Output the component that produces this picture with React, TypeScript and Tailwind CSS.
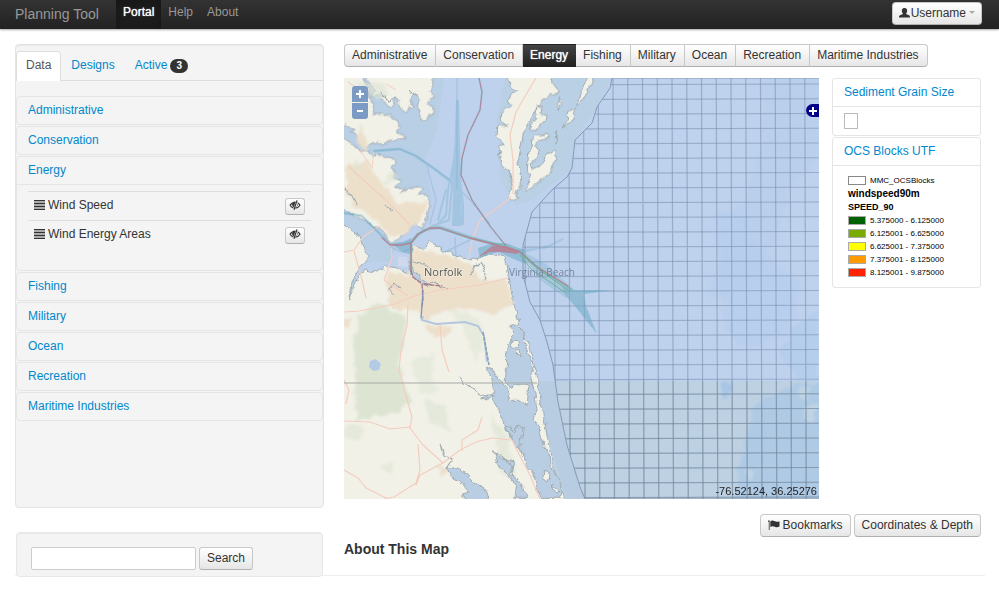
import type { ReactNode } from "react";

const font = "font-['Liberation_Sans',Arial,sans-serif]";
const btn =
  "border border-[#c8c8c8] border-b-[#b0b0b0] bg-linear-to-b from-white to-[#e6e6e6] pb-0.5 text-[#333] cursor-pointer";

const themes = [
  "Administrative",
  "Conservation",
  "Energy",
  "Fishing",
  "Military",
  "Ocean",
  "Recreation",
  "Maritime Industries",
];

const ramp = [
  { color: "bg-[#006100]", label: "5.375000 - 6.125000" },
  { color: "bg-[#7aab00]", label: "6.125001 - 6.625000" },
  { color: "bg-[#ffff00]", label: "6.625001 - 7.375000" },
  { color: "bg-[#ff9900]", label: "7.375001 - 8.125000" },
  { color: "bg-[#ff2200]", label: "8.125001 - 9.875000" },
];

function ListIcon() {
  return (
    <svg width="11" height="10" viewBox="0 0 11 10" aria-hidden="true" shapeRendering="crispEdges">
      <path d="M0 0H11V10H0Z" fill="#aaa" />
      <path d="M0 .5h11M0 3.500h11M0 6.500h11M0 9.500h11" stroke="#333" strokeWidth="1" />
    </svg>
  );
}

function EyeOffIcon() {
  return (
    <svg width="12" height="10" viewBox="0 0 12 10" fill="none" aria-hidden="true">
      <path d="M1 5.200Q3 2.200 6.600 2.100M1 5.200Q2.200 7.200 4.300 8" stroke="#333" strokeWidth="1.200" />
      <path d="M6.300 2.500 4.700 7.400Q2.900 6.400 3.100 4.600 3.700 2.700 6.300 2.500Z" fill="#333" />
      <path d="M8.600 2.700Q10.200 3.500 11 5.200 9.300 7.900 6.300 8.100" stroke="#333" strokeWidth="1.200" />
      <path d="M8 .4 5 9.700" stroke="#333" strokeWidth="1.200" />
      <path d="M8.700 4.200Q9 5.700 7.400 6.600" stroke="#555" strokeWidth=".8" />
    </svg>
  );
}

function UserIcon() {
  return (
    <svg width="11" height="10" viewBox="0 0 11 10" fill="#333" aria-hidden="true">
      <path d="M5.500 0C7.700 0 8.300 1.400 8.100 3.200 8 4.500 7.300 5 7.200 5.700 7.300 6.400 8.400 6.600 9.600 7 10.700 7.400 11 8.200 11 9.500H0C0 8.200.3 7.400 1.400 7 2.600 6.600 3.700 6.400 3.800 5.700 3.700 5 3 4.500 2.900 3.200 2.700 1.400 3.300 0 5.500 0Z" />
    </svg>
  );
}

function FlagIcon() {
  return (
    <svg width="12" height="10" viewBox="0 0 12 10" fill="#333" aria-hidden="true">
      <path d="M0 .5H1.600V10H.8V2L0 1.400Z" />
      <path d="M2.300 1.200C4 .2 5.400.6 6.800 1.300 8.400 2 9.800 1.900 11.500 1.200V6.600C9.900 7.500 8.300 7.500 6.800 6.800 5.200 6.100 3.900 5.900 2.300 6.900Z" />
    </svg>
  );
}

function ThemeLink({ name }: { name: string }) {
  return (
    <a href="#" className="block px-[11px] py-[5px] leading-[17px] text-[#0088cc]">
      {name}
    </a>
  );
}

function LayerRow({ name }: { name: string }) {
  return (
    <li className="flex h-[29px] items-center justify-between border-t border-[#ddd] px-1.5 text-[#333]">
      <span className="flex items-center gap-[3px] pb-0.5">
        <ListIcon />
        {name}
      </span>
      <button
        type="button"
        aria-label={`Hide ${name}`}
        className={`flex h-[17px] w-5 items-center justify-center rounded-[3px] ${btn}`}
      >
        <EyeOffIcon />
      </button>
    </li>
  );
}

function LegendCard({ title, children }: { title: string; children: ReactNode }) {
  return (
    <section className="rounded-[3px] border border-[#e5e5e5]">
      <h2 className="border-b border-[#e5e5e5] px-[11px] py-[5px] leading-[17px]">
        <a href="#" className="text-[#0088cc]">
          {title}
        </a>
      </h2>
      {children}
    </section>
  );
}

const gridStops = Array.from({ length: 30 }, (_, i) => i);
const outerShelf =
  "M612 78 610 88 597 107 592 123 575 140 572 168 567 177 553 189 532 212 523 245 523 275 530 302 540 320 547 342 553 365 558 402 567 445 580 487 585 499H840V78Z";

function ChartMap() {
  return (
    <svg
      viewBox="344 78 475 421"
      preserveAspectRatio="xMidYMid slice"
      className="block h-full w-full"
      role="img"
      aria-label="Map of the coast around Norfolk and Virginia Beach"
    >
      <defs>
        <filter id="coast" x="0" y="0" width="100%" height="100%" colorInterpolationFilters="sRGB">
          <feTurbulence type="fractalNoise" baseFrequency="0.13" numOctaves="3" seed="4" />
          <feDisplacementMap in="SourceGraphic" scale="6" xChannelSelector="R" yChannelSelector="G" />
        </filter>
        <filter id="soft" x="-20%" y="-20%" width="140%" height="140%" colorInterpolationFilters="sRGB">
          <feTurbulence type="fractalNoise" baseFrequency="0.09" numOctaves="3" seed="9" />
          <feDisplacementMap in="SourceGraphic" scale="10" xChannelSelector="R" yChannelSelector="G" />
          <feGaussianBlur stdDeviation="0.8" />
        </filter>
        <clipPath id="shelf">
          <path d={outerShelf} />
        </clipPath>
      </defs>

      <rect x="344" y="78" width="475" height="421" fill="#bed1ed" />
      <path d="M344 78H444L437 130 425 160 432 200 420 222 400 240 390 262 344 262Z" fill="#b9cfe6" />
      <path d="M505 78H612L597 107 575 140 572 168 532 200 516 205 500 180 497 120Z" fill="#bad0e5" />
      <g filter="url(#soft)" fill="#b3cdec" opacity=".75">
        <path d="M765 78H819V160L790 190 770 250 745 290 710 300 715 270 740 220 760 150Z" opacity=".5" />
        <path d="M715 215 740 205 760 250 800 285 790 330 750 350 725 330Z" opacity=".6" />
        <path d="M819 310 790 330 780 355 800 383H819Z" />
      </g>
      <path d="M344 381H819V499H344Z" fill="#bdd1e3" />
      <path d="M532 381 H556L558 402 567 445 580 487 585 499H567L547 435Z" fill="#b8cde2" />
      <g filter="url(#soft)">
        <path d="M825 383H795L785 392 765 398 752 408 748 435 740 460 732 505H825Z" fill="#afcae4" />
        <path d="M800 385 810 388 806 400 798 398ZM803 410 818 405 812 424 803 420ZM746 468 755 472 750 482Z" fill="#c0d4e4" />
        <path d="M722 383 732 384 728 400 722 396Z" fill="#a9c6e6" />
      </g>

      <g filter="url(#coast)" stroke="#a0abb2" strokeWidth="1" strokeLinejoin="round">
        <path
          fill="#f1f1e8"
          d="M340 222 350 230 360 237 368 256 360 268 352 282 350 300 354 284 364 270 378 272 386 266 397 268 407 274 411 262 412 246 424 249 429 241 444 250 456 256 472 260 486 256 494 255 503 257 507 264 511 290 515 308 520 325 530 348 537 375 541 402 547 435 553 468 567 505H330Z"
        />
        <g transform="translate(340 75) scale(.3333)" strokeWidth="3">
          <path
            fill="#f1f1e8"
            d="M75 0 95 30 105 45 100 66 122 60 130 80 145 98 162 92 160 70 176 74 182 104 198 112 208 96 222 98 215 70 224 58 238 72 232 94 240 112 240 132 262 138 270 118 280 120 278 98 262 84 276 70 272 50 282 30 278 0Z"
          />
          <path
            fill="#f1f1e8"
            d="M0 0H68L80 30 96 86 98 120 122 112 134 122 150 118 170 138 182 156 168 172 198 190 155 194 130 210 110 202 78 214 62 205 50 180 30 172 46 164 24 150 0 142Z"
          />
          <path
            fill="#f1f1e8"
            d="M0 186 32 202 54 226 78 228 98 238 122 240 158 250 166 266 150 276 166 288 160 310 184 318 166 334 196 340 180 356 212 338 238 335 248 344 232 356 258 362 270 388 262 420 246 462 226 440 212 458 190 480 158 504 142 492 122 458 94 448 62 432 0 396Z"
          />
        </g>
        <g transform="translate(480 75) scale(.3333)" strokeWidth="3" fill="#f1f1e8">
          <path d="M84 0 90 36 114 46 92 56 84 84 92 92 66 112 64 134 82 150 54 152 50 186 76 208 56 214 62 260 88 292 97 336 86 364 94 376 116 372 106 352 124 332 116 250 130 176 148 140 184 78 214 60 238 50 215 20 216 0Z" />
          <path d="M170 96 184 92 180 116 202 122 196 138 172 162 148 164 154 144 168 130Z" />
          <path d="M160 178 186 180 204 174 204 188 178 194 164 214 176 230 172 246 152 262 158 280 190 266 200 238 226 224 228 252 216 282 196 306 160 336 134 350 142 322 152 300 142 286 146 232 156 218Z" />
          <path d="M325 0H350L322 56 290 92 300 56ZM262 110 288 100 278 136 246 160 262 134ZM232 166 226 220 230 188ZM238 66 244 90 234 106Z" />
        </g>
      </g>

      <g filter="url(#soft)">
        <g fill="#ecdfca" opacity=".95">
          <path d="M346 168 366 160 374 174 390 190 397 205 426 200 426 214 417 225 396 238 386 232 376 220 352 206 346 190Z" />
          <path d="M414 249 430 250 444 254 456 260 468 263 474 275 484 280 508 280 513 306 490 314 470 308 446 310 425 322 415 309 400 312 388 300 386 270 408 276Z" />
          <path d="M424 324 452 326 446 338 430 334Z" />
          <path d="M358 122 368 146 368 154 358 142ZM344 318 356 318 344 328Z" />
          <path d="M436 466 450 468 440 477Z" />
        </g>
        <g fill="#dde5d2">
          <path d="M358 316 380 302 405 318 404 350 398 362 402 380 412 400 400 412 374 418 356 420 354 345Z" />
          <path d="M412 360 434 355 430 380 440 392 420 394ZM450 308 480 318 484 350 474 360 460 325Z" opacity=".5" />
          <path d="M425 400 445 405 450 430 430 425ZM344 425 364 428 360 442 344 436ZM380 465 394 462 390 475Z" opacity=".6" />
          <path d="M492 415 505 430 515 470 520 490 500 470 496 440ZM352 82 385 86 392 96 378 100ZM352 160 362 165 356 182ZM388 172 396 178 384 186Z" opacity=".6" />
        </g>
      </g>
      <path d="M398 257 407 257 408 267 398 266Z" fill="#cfd9ec" />

      <g filter="url(#coast)" fill="#b9cee2" stroke="#a0abb2" strokeLinejoin="round">
        <g transform="translate(340 285) scale(.3333)" strokeWidth="3">
          <path d="M512 124 530 120 548 136 552 170 560 196 574 228 580 262 572 280 584 320 590 370 580 394 594 420 610 470 628 520 632 552 654 580 668 612 660 640H600L584 580 560 540 544 490 522 470 498 438 488 400 462 350 450 330 462 322 456 286 442 250 454 248 468 272 492 300 510 322 506 346 534 346 562 362 566 302 526 298 508 306 496 290 500 230 498 200 512 170 520 144Z" />
          <path d="M492 420 512 424 520 444 536 420 550 426 542 484 528 482Z" />
          <path d="M318 546 350 550 382 568 400 590 430 608 452 650H388L364 630 386 624 360 590 330 572Z" />
          <path d="M460 494 482 524 520 530 512 570 544 596 560 640H524L530 602 502 566 480 548Z" />
          <path d="M425 338 456 332 442 346Z" />
        </g>
        <path fill="#f1f1e8" d="M511 341 519 342 518 348 512 348ZM515 352 520 350 521 356ZM544 470 550 474 548 482 543 478ZM552 484 560 490 556 494Z" />
        <path d="M409 262 414 270 420 278 430 284 428 287 418 281 410 275Z" />
        <path
          fill="none"
          strokeWidth="1.200"
          d="M459 376 464 384 472 388 478 392 486 396 494 396M440 445 444 455 452 460 448 466 445 468M494 450 502 458 512 466 514 478M344 188 352 196 358 206M400 287 394 284 388 290 394 294M424 284 434 282 448 289M480 262 474 268 470 276M480 262 486 272 484 282M412 262 422 264 430 268M380 92 388 100 396 98M410 90 416 96M386 205 392 210"
        />
      </g>
      <path d="M370 361 376 359 381 364 379 370 373 371 369 367Z" fill="#b3cbe6" />

      <g fill="none" stroke="#f4cdbf" strokeWidth="1.200" strokeLinejoin="round">
        <path d="M536 78 524 98 516 112 510 135 513 160 513 194M511 197 500 206 480 220 472 240 469 258" />
        <path d="M344 312 360 311 395 304 414 296 440 290 480 285 508 278" />
        <path d="M408 305 407 325 401 350 399 370 405 392 412 417 410 428 422 444 443 463" />
        <path d="M344 421 370 422 390 429 410 427M418 444 420 470 416 483 394 497 384 499M443 463 420 475 416 485M344 470 358 478 366 488 378 494 388 499" />
        <path d="M443 463 460 450 476 442 492 438 512 440 520 456 530 475 540 499M462 451 462 440 478 430 482 417" />
        <path d="M440 325 442 350 449 372M344 380 349 390 346 404M344 252 354 250 364 236 380 226M391 245 392 258 384 280 408 296M354 251 362 280 366 298M348 166 370 186 386 200 410 225" />
        <path d="M430 278 450 275M374 150 372 168 360 150M348 82 360 90 356 100M386 84 396 90" opacity=".8" />
      </g>
      <path d="M344 383H537" stroke="#a8aaa5" strokeWidth="1.200" />
      <path d="M423 316 422 320 436 324 465 322 478 326 484 336 487 362" fill="none" stroke="#b4c6de" strokeWidth="2" />
      <path d="M483 332 486 348 489 365" fill="none" stroke="#85a0b8" strokeWidth="1.500" strokeDasharray="4 1" />

      <g clipPath="url(#shelf)">
        <g stroke="#7187a8" strokeOpacity=".5" strokeWidth="1.200">
          {gridStops.map((i) => (
            <path key={i} d={`M${524.5 + i * 14.75} 78l1.500 421M515 ${85 + i * 14.75}l310 -1`} />
          ))}
        </g>
        <g stroke="#71838e" strokeOpacity=".35" strokeWidth="1.200">
          {gridStops.map((i) => (
            <path key={i} d={`M${525.6 + i * 14.75} 381l.4 118`} />
          ))}
          {gridStops.slice(21).map((i) => (
            <path key={i} d={`M515 ${85 + i * 14.75}l310 -1`} />
          ))}
        </g>
      </g>
      <path d={outerShelf} fill="none" stroke="#8799b6" strokeWidth="1" />

      <g fill="none" stroke="#559fbd" strokeLinecap="round" strokeLinejoin="round">
        <g opacity=".24">
          <path d="M456 100 459 100 462 226 452 226Z" fill="#559fbd" stroke="none" />
          <path d="M455 150 449 220 432 226M454 160 448 190 446 215 436 226M459 170 463 205 463 224M446 190 438 220" strokeWidth="2" />
          <path d="M374 151 400 149 416 156 436 170 454 184" strokeWidth="3" />
          <path d="M454 184 470 200 490 224M426 162 436 200 430 224" strokeWidth="1.200" />
          <path d="M344 213 362 216 382 236 392 245 410 242 424 230 440 227 470 237 500 246" strokeWidth="3" />
          <path d="M520 250 545 248 563 239M520 253 552 245M455 238 456 258M445 252 470 240M390 247 402 252 412 248" strokeWidth="1.500" />
        </g>
        <path d="M344 213 362 216 378 232 386 240M374 151 400 149 416 156 450 180" opacity=".4" strokeWidth="1" />
        <path d="M457 78V190" opacity=".35" strokeWidth="1" strokeDasharray="7 1" />
      </g>
      <g fill="#66a8c0" opacity=".5">
        <path d="M562 287 575 290 614 290 584 294 586 306 597 334 578 310 566 296Z" />
        <path d="M478 248 494 243 506 243 524 250 526 264 516 260 498 252 480 258Z" />
        <path d="M392 244 404 242 411 238 411 254 404 253Z" />
        <path d="M520 250 546 264 574 290 566 298 540 280Z" opacity=".5" />
      </g>
      <g fill="none" strokeLinejoin="round" strokeLinecap="round">
        <path d="M411 271V243L418 234 430 228 440 228 470 238 500 245 520 252 540 270 571 289" stroke="#6fb4a8" strokeWidth="2.500" opacity=".6" />
        <path d="M382 238 390 245 402 245 411 243M411 271V243L418 234 430 228 440 228 470 238 500 246 520 252 536 266 568 286" stroke="#bd7586" strokeWidth="1.300" opacity=".8" />
        <path d="M520 255 532 270 550 282 566 293M524 256 548 276 568 290" stroke="#65b07c" strokeWidth="1" opacity=".8" />
        <path d="M479 78 482 92 480 110 468 135 462 158 461 175 472 200 490 226 506 246" stroke="#6eaeb0" strokeWidth="1.800" opacity=".4" />
        <path d="M479 78 482 92 480 110 468 135 462 158 461 175 472 200 490 226 506 246" stroke="#b97088" strokeWidth="1" strokeDasharray="2 1" opacity=".85" />
        <path d="M411 271 413 277 422 284 423 300 422 306M424 284 432 285 442 286" stroke="#ad7184" strokeWidth="1.300" strokeDasharray="4 2" />
        <path d="M423 290 422 306 421 318" stroke="#7f93b4" strokeWidth="1.300" strokeDasharray="3 1" />
      </g>
      <path d="M478 257 492 246 506 246 520 251 517 254 502 252 490 252Z" fill="#bb7f92" opacity=".85" />

      <g fontFamily="'Open Sans', sans-serif" fontSize="11">
        <text x="424" y="276" fill="#58595a" stroke="#f2ecdf" strokeOpacity=".6" strokeWidth="2" paintOrder="stroke">
          Norfolk
        </text>
        <text x="509" y="276" fill="#77859c" fontSize="10">
          Virginia Beach
        </text>
      </g>
    </svg>
  );
}

export default function App() {
  return (
    <div className={`min-h-[589px] bg-white text-xs text-[#333] ${font}`}>
      <header className="flex h-[29px] items-start justify-between bg-linear-to-b from-[#333] to-[#222] pr-[17px] pl-[15px] shadow-[0_1px_2px_rgba(0,0,0,0.35)]">
        <div className="flex h-full items-start">
          <a href="#" className="w-[101px] text-sm leading-7 text-[#999]">
            Planning Tool
          </a>
          <nav className="flex h-full text-[#999]">
            <a
              href="#"
              className="h-full bg-[#1c1c1c] px-[7px] leading-6 text-white shadow-[inset_0_3px_8px_rgba(0,0,0,0.2)] text-shadow-[0_0_1px_#fff]"
            >
              Portal
            </a>
            <a href="#" className="px-[7px] leading-6">
              Help
            </a>
            <a href="#" className="px-[7px] leading-6">
              About
            </a>
          </nav>
        </div>
        <button type="button" className={`mt-[2px] flex h-[23px] items-center gap-px rounded-[4px] px-1.5 ${btn}`}>
          <UserIcon />
          Username
          <svg width="6" height="3" viewBox="0 0 6 3" className="ml-0.5" aria-hidden="true">
            <path d="M0 0H6L3 3Z" fill="#aaa" />
          </svg>
        </button>
      </header>

      <main className="mr-[14px] ml-[15px] flex gap-5 border-b border-[#eee] pt-[15px]">
        <aside className="-mb-0.5 flex w-[309px] shrink-0 flex-col gap-6">
          <section className="h-[464px] rounded-[4px] border border-[#e3e3e3] bg-[#f4f4f4] pt-1.5 shadow-[inset_0_1px_1px_rgba(0,0,0,0.05)]">
            <nav className="flex h-[30px] border-b border-[#ddd] text-[#0088cc]">
              <a
                href="#"
                className="-mb-px h-[30px] rounded-t-[4px] border border-b-0 border-[#ddd] bg-white px-[9px] leading-[27px] text-[#555]"
              >
                Data
              </a>
              <a href="#" className="px-2.5 leading-[29px]">
                Designs
              </a>
              <a href="#" className="ml-0.5 flex items-center gap-[3px] px-2 leading-[29px]">
                Active
                <span className="rounded-full bg-[#333] px-1.5 text-[10px] leading-[14px] font-bold text-white">3</span>
              </a>
            </nav>
            <ul className="mt-[15px] flex flex-col gap-px">
              {themes.map((t) => (
                <li key={t} className="rounded-[4px] border border-[#e5e5e5]">
                  <ThemeLink name={t} />
                  {t === "Energy" && (
                    <div className="border-t border-[#e5e5e5] px-[11px] pt-1.5 pb-[21px]">
                      <ul>
                        <LayerRow name="Wind Speed" />
                        <LayerRow name="Wind Energy Areas" />
                      </ul>
                    </div>
                  )}
                </li>
              ))}
            </ul>
          </section>
          <form
            onSubmit={(e) => e.preventDefault()}
            className="mx-px flex items-center gap-[3px] rounded-[4px] border border-[#e8e8e8] bg-[#f4f4f4] px-3.5 pt-3.5 pb-1.5 shadow-[inset_0_1px_1px_rgba(0,0,0,0.05)]"
          >
            <input
              type="text"
              aria-label="Search"
              className="h-[23px] w-[165px] rounded-[2px] border border-[#ccc] bg-white px-1"
            />
            <button type="submit" className={`h-[23px] rounded-[3px] px-[7px] ${btn}`}>
              Search
            </button>
          </form>
        </aside>

        <div className="flex min-w-0 flex-1 flex-col pr-1">
          <div className="flex" role="group" aria-label="Themes">
            {themes.map((t) =>
              t === "Energy" ? (
                <button
                  key={t}
                  type="button"
                  className="h-[23px] cursor-pointer border-y border-[#222] bg-linear-to-b from-[#444] to-[#222] pr-2 pb-0.5 pl-[7px] text-white text-shadow-[0_0_1px_#fff]"
                >
                  {t}
                </button>
              ) : (
                <button
                  key={t}
                  type="button"
                  className={`h-[23px] border-l-0 pr-2 pl-[7px] first:rounded-l-[4px] first:border-l last:rounded-r-[4px] ${btn}`}
                >
                  {t}
                </button>
              ),
            )}
          </div>

          <div className="mt-[11px] flex items-start gap-[13px]">
            <div className="relative h-[421px] min-w-0 flex-1 overflow-hidden">
              <ChartMap />
              <div className="absolute top-2 left-2 flex flex-col gap-px">
                <button
                  type="button"
                  aria-label="Zoom in"
                  className="flex h-4 w-4 items-center justify-center rounded-t-[3px] bg-[#7b9ac4] text-white"
                >
                  <svg width="8" height="8" viewBox="0 0 8 8" aria-hidden="true">
                    <path d="M0 4H8M4 0V8" stroke="currentColor" strokeWidth="2" />
                  </svg>
                </button>
                <button
                  type="button"
                  aria-label="Zoom out"
                  className="flex h-4 w-4 items-center justify-center rounded-b-[3px] bg-[#7b9ac4] text-white"
                >
                  <svg width="8" height="8" viewBox="0 0 8 8" aria-hidden="true">
                    <path d="M1 4H7" stroke="currentColor" strokeWidth="2" />
                  </svg>
                </button>
              </div>
              <button
                type="button"
                aria-label="Show layers"
                className="absolute top-[26px] right-0 flex h-[13px] w-[13px] items-center justify-center rounded-l-full bg-[#00008b] text-white"
              >
                <svg width="8" height="8" viewBox="0 0 8 8" aria-hidden="true">
                  <path d="M0 4H8M4 0V8" stroke="currentColor" strokeWidth="2" />
                </svg>
              </button>
              <output className="absolute right-0.5 bottom-0 text-[11px] leading-[15px] text-[#222]">
                -76.52124, 36.25276
              </output>
            </div>

            <div className="flex w-[149px] shrink-0 flex-col gap-px">
              <LegendCard title="Sediment Grain Size">
                <label className="flex h-[28px] items-center px-[11px]">
                  <input
                    type="checkbox"
                    aria-label="Sediment Grain Size"
                    className="h-4 w-3.5 appearance-none border border-[#bbb] bg-white"
                  />
                </label>
              </LegendCard>
              <LegendCard title="OCS Blocks UTF">
                <div className="px-[15px] py-2 text-black">
                  <div className="flex h-[13px] items-center gap-1">
                    <span className="h-[9px] w-[18px] border border-[#888] bg-white" />
                    <span className="text-[8px] leading-none">MMC_OCSBlocks</span>
                  </div>
                  <div className="text-[10px] leading-[14px] font-bold">windspeed90m</div>
                  <div className="text-[9px] leading-[13px] font-bold">SPEED_90</div>
                  {ramp.map((r) => (
                    <div key={r.label} className="flex h-[13px] items-center gap-1">
                      <span className={`h-[9px] w-[18px] border border-[#aaa] ${r.color}`} />
                      <span className="text-[8px] leading-none whitespace-nowrap">{r.label}</span>
                    </div>
                  ))}
                </div>
              </LegendCard>
            </div>
          </div>

          <div className="mt-[15px] flex justify-end gap-[3px]">
            <button type="button" className={`flex h-[23px] items-center gap-[3px] rounded-[4px] px-[7px] ${btn}`}>
              <FlagIcon />
              Bookmarks
            </button>
            <button type="button" className={`h-[23px] rounded-[4px] px-[7px] ${btn}`}>
              Coordinates &amp; Depth
            </button>
          </div>
          <h1 className="mt-0.5 text-sm leading-5 font-bold">About This Map</h1>
        </div>
      </main>
    </div>
  );
}
